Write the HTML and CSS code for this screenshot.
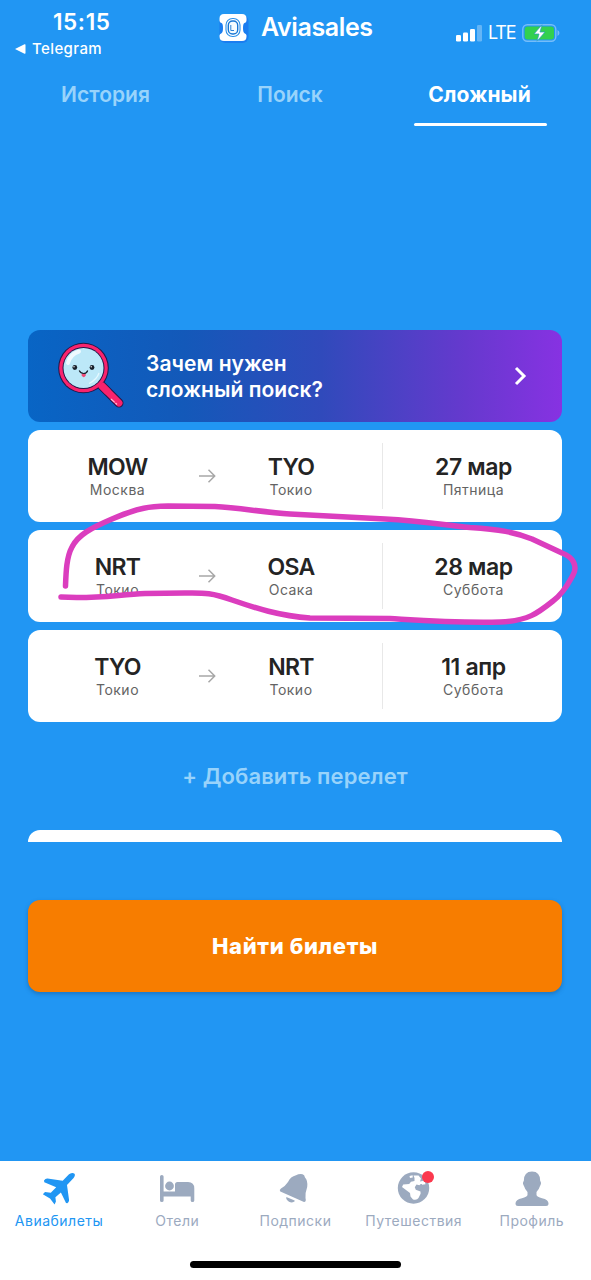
FILE: index.html
```html
<!DOCTYPE html>
<html lang="ru">
<head>
<meta charset="utf-8">
<title>Aviasales</title>
<link rel="stylesheet" href="styles.css">
</head>
<body>
<div class="screen">
  <header class="status">
    <div class="status-left">
      <div class="clock">15:15</div>
      <div class="back">
        <svg width="11" height="10" viewBox="0 0 11 10"><path d="M0 5 9.5.3Q10.500 0 10.500 1V9q0 1-1 .700z" fill="#fff"/></svg>
        <span>Telegram</span>
      </div>
    </div>
    <div class="brand">
      <svg class="brand-logo" width="32" height="32" viewBox="0 0 32 32">
        <rect x="2.500" y="3" width="29" height="28" rx="6" fill="#1a7df0"/>
        <path d="M7 2H25Q29.500 2 29.500 6.500V8.500Q29.500 10.500 27.500 11Q26 11.500 26 16Q26 20.500 27.500 21.200Q29.500 22 29.500 23.500V24.500Q29.500 29 25 29H7Q2.500 29 2.500 24.500V23.500Q2.500 22 4.500 21.200Q6 20.500 6 16Q6 11.500 4.500 11Q2.500 10.500 2.500 8.500V6.500Q2.500 2 7 2Z" fill="#fff"/>
        <rect x="9" y="6.500" width="14" height="18" rx="6.500" fill="none" stroke="#2c91ea" stroke-width="1.100"/>
        <rect x="11.300" y="9" width="9.400" height="13" rx="4.200" fill="#f4fbff" stroke="#1877d4" stroke-width="1.400"/>
        <path d="M13.800 13V18.500H17" fill="none" stroke="#2c82d8" stroke-width="1"/>
      </svg>
      <span class="brand-name">Aviasales</span>
    </div>
    <div class="status-right">
      <svg width="27" height="17" viewBox="0 0 27 17" fill="#fff">
        <rect x="0" y="10" width="5" height="6.500" rx="1.300"/>
        <rect x="7" y="7.500" width="5" height="9" rx="1.300"/>
        <rect x="14" y="4" width="5" height="12.500" rx="1.300"/>
        <rect x="21" y="0" width="5" height="16.500" rx="1.300" opacity=".3"/>
      </svg>
      <span class="lte">LTE</span>
      <svg width="38" height="18" viewBox="0 0 38 18">
        <rect x=".8" y=".8" width="33" height="16.400" rx="4.500" fill="none" stroke="#76bdf9" stroke-width="1.400"/>
        <rect x="2.700" y="2.500" width="29.300" height="13" rx="3" fill="#32d04f"/>
        <path d="M35.500 6Q37.500 7 37.500 9T35.500 12Z" fill="#76bdf9"/>
        <path d="M20 .8 12 10H17L15 17.200 23 8H18Z" fill="#fff" stroke="#2a9cc0" stroke-width=".7"/>
      </svg>
    </div>
  </header>

  <nav class="tabs">
    <div class="tab t-history"><span>История</span></div>
    <div class="tab t-search"><span>Поиск</span></div>
    <div class="tab t-complex active"><span>Сложный</span></div>
  </nav>

  <main class="content">
    <section class="banner">
      <svg class="glass" width="68" height="68" viewBox="0 0 68 68">
        <path d="M44 44 61 61" stroke="#231747" stroke-width="9" stroke-linecap="round"/>
        <path d="M44 44 61 61" stroke="#f9236d" stroke-width="7" stroke-linecap="round"/>
        <circle cx="25.500" cy="26" r="25.300" fill="#231747"/>
        <circle cx="25.500" cy="26" r="24.300" fill="#f9236d"/>
        <circle cx="25.500" cy="26" r="21" fill="#231747"/>
        <circle cx="25.500" cy="26" r="20" fill="#bce8f8"/>
        <path d="M42.500 42.500 50 50" stroke="#f9236d" stroke-width="7"/>
        <path d="M10 21Q12 12.500 21 9.500" stroke="#eefaff" stroke-width="4" fill="none" stroke-linecap="round"/>
        <path d="M31 41.500Q39 37.500 41 31" stroke="#e5f8ff" stroke-width="1.300" fill="none"/>
        <circle cx="16.800" cy="25.500" r="2.400" fill="#17202b"/><circle cx="34" cy="25.500" r="2.400" fill="#17202b"/>
        <circle cx="16" cy="24.700" r=".7" fill="#fff"/><circle cx="33.200" cy="24.700" r=".7" fill="#fff"/>
        <path d="M23.700 31.500H27.700V33.500Q25.700 37 23.700 33.500Z" fill="#f04a78"/>
        <path d="M21.200 28.500Q22.700 31.500 25.700 31.500T29.700 28.500" stroke="#17202b" stroke-width="1.200" fill="none"/>
        <path d="M53 57 59 62.500" stroke="#ffc3d9" stroke-width="1.300" stroke-dasharray="5 1"/>
      </svg>
      <div class="banner-text"><div class="b1">Зачем нужен</div><div class="b2">сложный поиск?</div></div>
      <svg class="chevron" width="13" height="20" viewBox="0 0 13 20"><path d="M2 2 10 10 2 18" fill="none" stroke="#fff" stroke-width="3"/></svg>
    </section>

    <section class="flight">
      <div class="place"><b>MOW</b><small>Москва</small></div>
      <svg class="arrow" width="17" height="14" viewBox="0 0 17 14"><path d="M0 7H15.500M9.500.8 15.700 7 9.500 13.200" fill="none" stroke="#a8a8a8" stroke-width="1.500"/></svg>
      <div class="place"><b>TYO</b><small>Токио</small></div>
      <div class="date"><b>27 мар</b><small>Пятница</small></div>
    </section>
    <section class="flight">
      <div class="place"><b>NRT</b><small>Токио</small></div>
      <svg class="arrow" width="17" height="14" viewBox="0 0 17 14"><path d="M0 7H15.500M9.500.8 15.700 7 9.500 13.200" fill="none" stroke="#a8a8a8" stroke-width="1.500"/></svg>
      <div class="place"><b>OSA</b><small>Осака</small></div>
      <div class="date"><b>28 мар</b><small>Суббота</small></div>
    </section>
    <section class="flight">
      <div class="place"><b>TYO</b><small>Токио</small></div>
      <svg class="arrow" width="17" height="14" viewBox="0 0 17 14"><path d="M0 7H15.500M9.500.8 15.700 7 9.500 13.200" fill="none" stroke="#a8a8a8" stroke-width="1.500"/></svg>
      <div class="place"><b>NRT</b><small>Токио</small></div>
      <div class="date"><b>11 апр</b><small>Суббота</small></div>
    </section>

    <div class="add"><span>+ Добавить перелет</span></div>
    <div class="next-card"></div>
    <div class="submit"><span>Найти билеты</span></div>
  </main>

  <footer class="bottom">
    <div class="items">
      <div class="item current">
        <svg width="34" height="34" viewBox="0 0 34 34" fill="currentColor"><path d="M27 2.200Q30.500 .2 32.200 1.400T31.600 6L25 13 27.100 28.200Q26.900 30 25.300 31.200L24 31 18.900 20.500 13.400 25.200 13.900 29.500 12.600 32.400 8 26.500.8 22.200 3 20 8.800 20.700 14.200 15.200 2.300 10.200 2 8.600Q3.400 6.300 5.500 6.500L20.700 8.700Z"/></svg>
        <span>Авиабилеты</span>
      </div>
      <div class="item">
        <svg width="36" height="34" viewBox="0 0 36 34" fill="currentColor"><path d="M1 4.500Q1 3 2.800 3T4.600 4.500V19.500H16V12.500Q16 10 18.500 10H29Q35.300 10 35.300 16.500V28.500Q35.300 30 33.500 30T31.700 28.500V24.500H4.600V28.500Q4.600 30 2.800 30T1 28.500Z"/><circle cx="10.500" cy="14" r="4.400"/></svg>
        <span>Отели</span>
      </div>
      <div class="item">
        <svg width="34" height="34" viewBox="0 0 34 34" fill="currentColor"><path d="M18 3.200Q21 1.700 24.500 2.200Q26.500 2.500 27 5.500Q30 8.500 29.200 15Q27 21 27.500 26Q28.500 30 26 30L2.300 19.500Q.8 18 3 16.500Q7 14.500 10 10Q12.500 4.500 18 3.200ZM8.300 25Q8 27 9 28Q12 32 16.500 29.500L16.700 28.600Z"/></svg>
        <span>Подписки</span>
      </div>
      <div class="item">
        <div class="globe">
          <svg width="34" height="34" viewBox="0 0 34 34"><circle cx="16.500" cy="17" r="15.700" fill="currentColor"/><path d="M5 16 6.200 13.500 12.200 13 14 10.800 17.500 10 17.500 7 16.500 4.500 21.500 4.400 24 7.500 23 10.500 27 9.800 26.500 12.600 23.700 13 22.400 14.300 19.500 13.500 17.800 16.200 18.800 18.700 23.500 20.500 23.600 22.800 21.500 27Q20 29.500 16 28.500L13.500 25.500 13 22 9 19ZM12.500 5 15.600 4.200 15.800 6.500 13 7ZM24.500 11.500 28 11 28.500 13.200 25 13.800Z" fill="#fff"/></svg>
          <i class="badge"></i>
        </div>
        <span>Путешествия</span>
      </div>
      <div class="item">
        <svg width="34" height="36" viewBox="0 0 34 36" fill="currentColor"><path d="M8.800 10Q8.800.5 17 .5T25.200 10Q27 12 24.800 15.500Q24 18.500 21.500 21V24Q22 26 27 27.200Q33.500 28.500 33.500 32.500Q33.500 35 31 35H3Q.5 35 .5 32.500Q.5 28.500 7 27.200Q12 26 12.500 24V21Q10 18.500 9.200 15.500Q7 12 8.800 10Z"/></svg>
        <span>Профиль</span>
      </div>
    </div>
    <div class="home"></div>
  </footer>

  <svg class="marker" width="591" height="140" viewBox="0 500 591 140"><path d="M65.500 586C66 572 66.500 557 72 547C78 535 91 528 112 519C140 507 150 506.500 168 506L215 506.500C240 508 262 512 290 514L385 519C425 521 442 525 470 527.500C500 529.500 514 532 532 539L562 553C573 557 578 566 573 575C569 582 565 592 553 601C538 613 528 621 500 622C455 623 430 621 390 618.500L310 618C280 616 255 608 232 600C210 592 202 593 185 593L145 593.500C115 595 95 599 61 597" fill="none" stroke="#db3dbe" stroke-width="5.500" stroke-linecap="round" stroke-linejoin="round"/></svg>
</div>
</body>
</html>
```
FILE: styles.css
```css
* { box-sizing: border-box; }
body { margin: 0; font-family: Inter, "Liberation Sans", sans-serif; }
svg { display: block; flex: none; }
span, b, small { white-space: nowrap; }

.screen { position: relative; width: 591px; height: 1280px; background: #2196f3; display: flex; flex-direction: column; overflow: hidden; }

.status { height: 66px; display: grid; grid-template-columns: 217px 200px 174px; color: #fff; }
.clock { padding: 8px 0 0 53px; font-size: 22.500px; line-height: 27px; font-weight: 600; letter-spacing: .6px; }
.back { display: flex; align-items: center; padding: 4px 0 0 15px; gap: 6px; font-size: 15px; line-height: 20px; font-weight: 500; letter-spacing: .4px; }
.brand { display: flex; align-items: flex-start; padding-top: 12px; gap: 12px; }
.brand-name { font-size: 25px; line-height: 31px; font-weight: 600; letter-spacing: -.4px; }
.status-right { display: flex; align-items: center; height: 32px; margin-top: 17px; padding-left: 39px; }
.lte { font-size: 18px; line-height: 22px; width: 39px; padding-left: 5px; flex: none; letter-spacing: -1.200px; }

.tabs { height: 60px; display: grid; grid-template-columns: 133px 133px 133px; column-gap: 54px; padding-left: 39px; }
.tab { height: 60px; padding-top: 15px; text-align: center; font-size: 21px; line-height: 27px; font-weight: 600; color: #98d3fb; }
.t-search { margin-left: -5px; }
.tab.active { color: #fff; position: relative; font-weight: 700; letter-spacing: .1px; }
.tab.active::after { content: ""; position: absolute; left: 1px; bottom: 0; width: 133px; height: 3px; border-radius: 2px; background: #fff; }

.content { margin: 204px 28px 0; width: 534px; flex: 1; }
.banner { height: 92px; border-radius: 12px; display: flex; align-items: center; padding-left: 30px; background: linear-gradient(90deg, #0865c5 0%, #1359b9 29%, #304abb 55%, #6639ce 82%, #8732e2 100%); color: #fff; }
.glass { margin-right: 20px; }
.banner-text { width: 368px; font-size: 21px; line-height: 26px; font-weight: 600; padding-top: 2px; letter-spacing: .05px; }

.flight { height: 92px; margin-top: 8px; border-radius: 12px; background: #fff; display: grid; grid-template-columns: 163px 16px 152px 203px; padding-left: 8px; align-items: center; color: #242424; overflow: hidden; }
.place, .date { display: flex; flex-direction: column; align-items: center; }
.flight b { font-size: 23px; line-height: 28px; font-weight: 600; }
.place b { letter-spacing: -.7px; }
.date b { letter-spacing: -.35px; }
.flight small { font-size: 14px; line-height: 18px; color: #636363; letter-spacing: .5px; }
.date { margin-left: 15px; height: 66px; width: 182px; border-left: 1px solid #e8e8e8; justify-content: center; }

.add { height: 108px; display: flex; align-items: center; justify-content: center; font-size: 22px; line-height: 28px; font-weight: 600; color: #98d3fb; letter-spacing: .1px; }
.next-card { height: 12px; background: #fff; border-radius: 12px 12px 0 0; }
.submit { margin-top: 58px; height: 92px; border-radius: 12px; background: #f77d00; color: #fff; display: flex; align-items: center; justify-content: center; font-size: 22px; line-height: 28px; font-weight: 800; letter-spacing: .65px; box-shadow: 0 2px 4px rgba(20, 70, 120, .4); }

.bottom { height: 119px; background: #fff; display: flex; flex-direction: column; align-items: center; }
.items { display: grid; grid-template-columns: repeat(5, 118.200px); width: 591px; height: 100px; padding-top: 10px; }
.item { display: flex; flex-direction: column; align-items: center; color: #9caabf; font-size: 14px; letter-spacing: .5px; }
.item > svg, .globe { height: 36px; }
.item > span { line-height: 18px; margin-top: 5px; }
.item.current { color: #2196f3; }
.globe { position: relative; }
.badge { position: absolute; right: -3px; top: 0; width: 12px; height: 12px; border-radius: 50%; background: #fb394e; }
.home { width: 211px; height: 7px; border-radius: 4px; background: #000; }

.marker { position: absolute; left: 0; top: 500px; }
```
